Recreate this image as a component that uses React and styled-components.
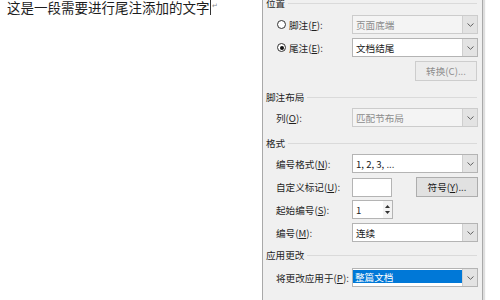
import styled, { createGlobalStyle } from "styled-components";

const GlobalStyle = createGlobalStyle`
    html, body {
        margin: 0;
        padding: 0;
        background: #ffffff;
        overflow: hidden;
    }
    body {
        width: 500px;
        height: 300px;
        font-family: "Noto Sans CJK SC", "Noto Sans", sans-serif;
    }
`;

const Page = styled.div`
    display: flex;
    width: 500px;
    height: 300px;
    overflow: hidden;
`;

const Document = styled.div`
    width: 262px;
    padding-left: 7px;
    box-sizing: border-box;
`;

const DocLine = styled.p`
    margin: 0;
    display: flex;
    align-items: flex-start;
    font-size: 13.5px;
    line-height: 15px;
    color: #1d1d1d;
    white-space: nowrap;
`;

const Caret = styled.span`
    width: 1px;
    height: 15px;
    background: #333;
`;

const ParaMark = styled.span`
    font-size: 7px;
    line-height: 8px;
    color: #8a8a8a;
    margin: 1px 0 0 1px;
`;

const Dialog = styled.div`
    width: 221px;
    height: 304px;
    margin-top: -4px;
    background: #f0f0f0;
    border-left: 1px solid #a9a9a9;
    border-right: 1px solid #a9a9a9;
    box-shadow: 2px 0 1px #dedede;
    box-sizing: border-box;
    display: flex;
    flex-direction: column;
    padding: 0 5px 0 3px;
    font-size: 9.6px;
    color: #1f1f1f;
`;

const Section = styled.section`
    display: flex;
    flex-direction: column;
    gap: 4px;
    margin-top: ${({ $top }) => $top || 0}px;
`;

const Heading = styled.div`
    display: flex;
    align-items: center;
    gap: 3px;
    height: 14px;
    line-height: 14px;
    margin-bottom: ${({ $after }) => $after || 0}px;

    &::after {
        content: "";
        flex: 1;
        height: 1px;
        background: #dadada;
    }
`;

const Row = styled.div`
    display: grid;
    grid-template-columns: 76px 1fr;
    align-items: center;
    height: 19px;
    padding-left: 10px;
`;

const Label = styled.span`
    display: flex;
    align-items: center;
    white-space: nowrap;
    line-height: 14px;

    u {
        text-decoration: underline;
        text-underline-offset: 1px;
    }
`;

const Radio = styled.span`
    width: 9px;
    height: 9px;
    margin: 0 3px 0 1px;
    border: 1px solid #333;
    border-radius: 50%;
    background: #fff;
    box-sizing: border-box;
    display: flex;
    align-items: center;
    justify-content: center;

    &::after {
        content: "";
        width: 4px;
        height: 4px;
        border-radius: 50%;
        background: ${({ $checked }) => ($checked ? "#111" : "transparent")};
    }
`;

const Combo = styled.div`
    display: flex;
    height: 19px;
    width: 126px;
    box-sizing: border-box;
    border: 1px solid ${({ $disabled }) => ($disabled ? "#cccccc" : "#b4b4b4")};
    background: ${({ $disabled }) => ($disabled ? "#f4f4f4" : "#ffffff")};
`;

const ComboText = styled.span`
    flex: 1;
    display: flex;
    align-items: center;
    padding-left: 3px;
    color: ${({ $disabled }) => ($disabled ? "#8c8c8c" : "#1a1a1a")};
    white-space: nowrap;
    overflow: hidden;
`;

const Selected = styled.span`
    flex: 1;
    margin: 1px 0 3px 0;
    padding-left: 2px;
    display: flex;
    align-items: center;
    background: #0078d7;
    color: #ffffff;
    line-height: 12px;
`;

const ArrowBox = styled.span`
    width: 14px;
    display: flex;
    align-items: center;
    justify-content: center;
    background: #e3e3e3;
    border-left: 1px solid #cfcfcf;
`;

const Field = styled.div`
    width: ${({ $w }) => $w}px;
    height: 19px;
    box-sizing: border-box;
    border: 1px solid #b4b4b4;
    background: #ffffff;
    display: flex;
    align-items: center;
`;

const FieldValue = styled.span`
    flex: 1;
    padding-left: 3px;
`;

const Spin = styled.span`
    width: 9px;
    height: 100%;
    display: flex;
    flex-direction: column;
    align-items: center;
    justify-content: center;
    gap: 3px;
    background: #f3f3f3;
`;

const Pair = styled.div`
    display: flex;
    justify-content: space-between;
    align-items: center;
    width: 126px;
`;

const Button = styled.button`
    width: 62px;
    height: 20px;
    padding: 0;
    font: inherit;
    font-size: 9.6px;
    line-height: 14px;
    background: ${({ disabled }) => (disabled ? "#ececec" : "#e1e1e1")};
    border: 1px solid ${({ disabled }) => (disabled ? "#cdcdcd" : "#adadad")};
    color: ${({ disabled }) => (disabled ? "#8d8d8d" : "#1a1a1a")};
`;

const ButtonRow = styled.div`
    display: flex;
    justify-content: flex-end;
    height: 20px;
`;

function Chevron() {
    return (
        <svg width="7" height="4" viewBox="0 0 7 4">
            <path d="M0.5 0.5 L3.5 3.3 L6.5 0.5" fill="none" stroke="#606060" strokeWidth="1" />
        </svg>
    );
}

function Select({ value, disabled, selected }) {
    return (
        <Combo $disabled={disabled}>
            {selected ? <Selected>{value}</Selected> : <ComboText $disabled={disabled}>{value}</ComboText>}
            <ArrowBox>
                <Chevron />
            </ArrowBox>
        </Combo>
    );
}

function Key({ text, k }) {
    return (
        <>
            {text}(<u>{k}</u>):
        </>
    );
}

export default function App() {
    return (
        <>
            <GlobalStyle />
            <Page>
                <Document>
                    <DocLine>
                        这是一段需要进行尾注添加的文字
                        <Caret />
                        <ParaMark>↵</ParaMark>
                    </DocLine>
                </Document>
                <Dialog>
                    <Section>
                        <Heading $after={1}>位置</Heading>
                        <Row>
                            <Label>
                                <Radio />
                                <Key text="脚注" k="F" />
                            </Label>
                            <Select value="页面底端" disabled />
                        </Row>
                        <Row>
                            <Label>
                                <Radio $checked />
                                <Key text="尾注" k="E" />
                            </Label>
                            <Select value="文档结尾" />
                        </Row>
                        <ButtonRow>
                            <Button disabled>转换(C)...</Button>
                        </ButtonRow>
                    </Section>
                    <Section $top={9}>
                        <Heading>脚注布局</Heading>
                        <Row>
                            <Label>
                                <Key text="列" k="O" />
                            </Label>
                            <Select value="匹配节布局" disabled />
                        </Row>
                    </Section>
                    <Section $top={9}>
                        <Heading>格式</Heading>
                        <Row>
                            <Label>
                                <Key text="编号格式" k="N" />
                            </Label>
                            <Select value="1, 2, 3, ..." />
                        </Row>
                        <Row>
                            <Label>
                                <Key text="自定义标记" k="U" />
                            </Label>
                            <Pair>
                                <Field $w={40} />
                                <Button>
                                    符号(<u>Y</u>)...
                                </Button>
                            </Pair>
                        </Row>
                        <Row>
                            <Label>
                                <Key text="起始编号" k="S" />
                            </Label>
                            <Field $w={41}>
                                <FieldValue>1</FieldValue>
                                <Spin>
                                    <svg width="5" height="3" viewBox="0 0 5 3">
                                        <path d="M2.5 0 L5 3 L0 3 Z" fill="#333" />
                                    </svg>
                                    <svg width="5" height="3" viewBox="0 0 5 3">
                                        <path d="M0 0 L5 0 L2.5 3 Z" fill="#333" />
                                    </svg>
                                </Spin>
                            </Field>
                        </Row>
                        <Row>
                            <Label>
                                <Key text="编号" k="M" />
                            </Label>
                            <Select value="连续" />
                        </Row>
                    </Section>
                    <Section $top={6}>
                        <Heading $after={2}>应用更改</Heading>
                        <Row>
                            <Label>
                                <Key text="将更改应用于" k="P" />
                            </Label>
                            <Select value="整篇文档" selected />
                        </Row>
                    </Section>
                </Dialog>
            </Page>
        </>
    );
}
